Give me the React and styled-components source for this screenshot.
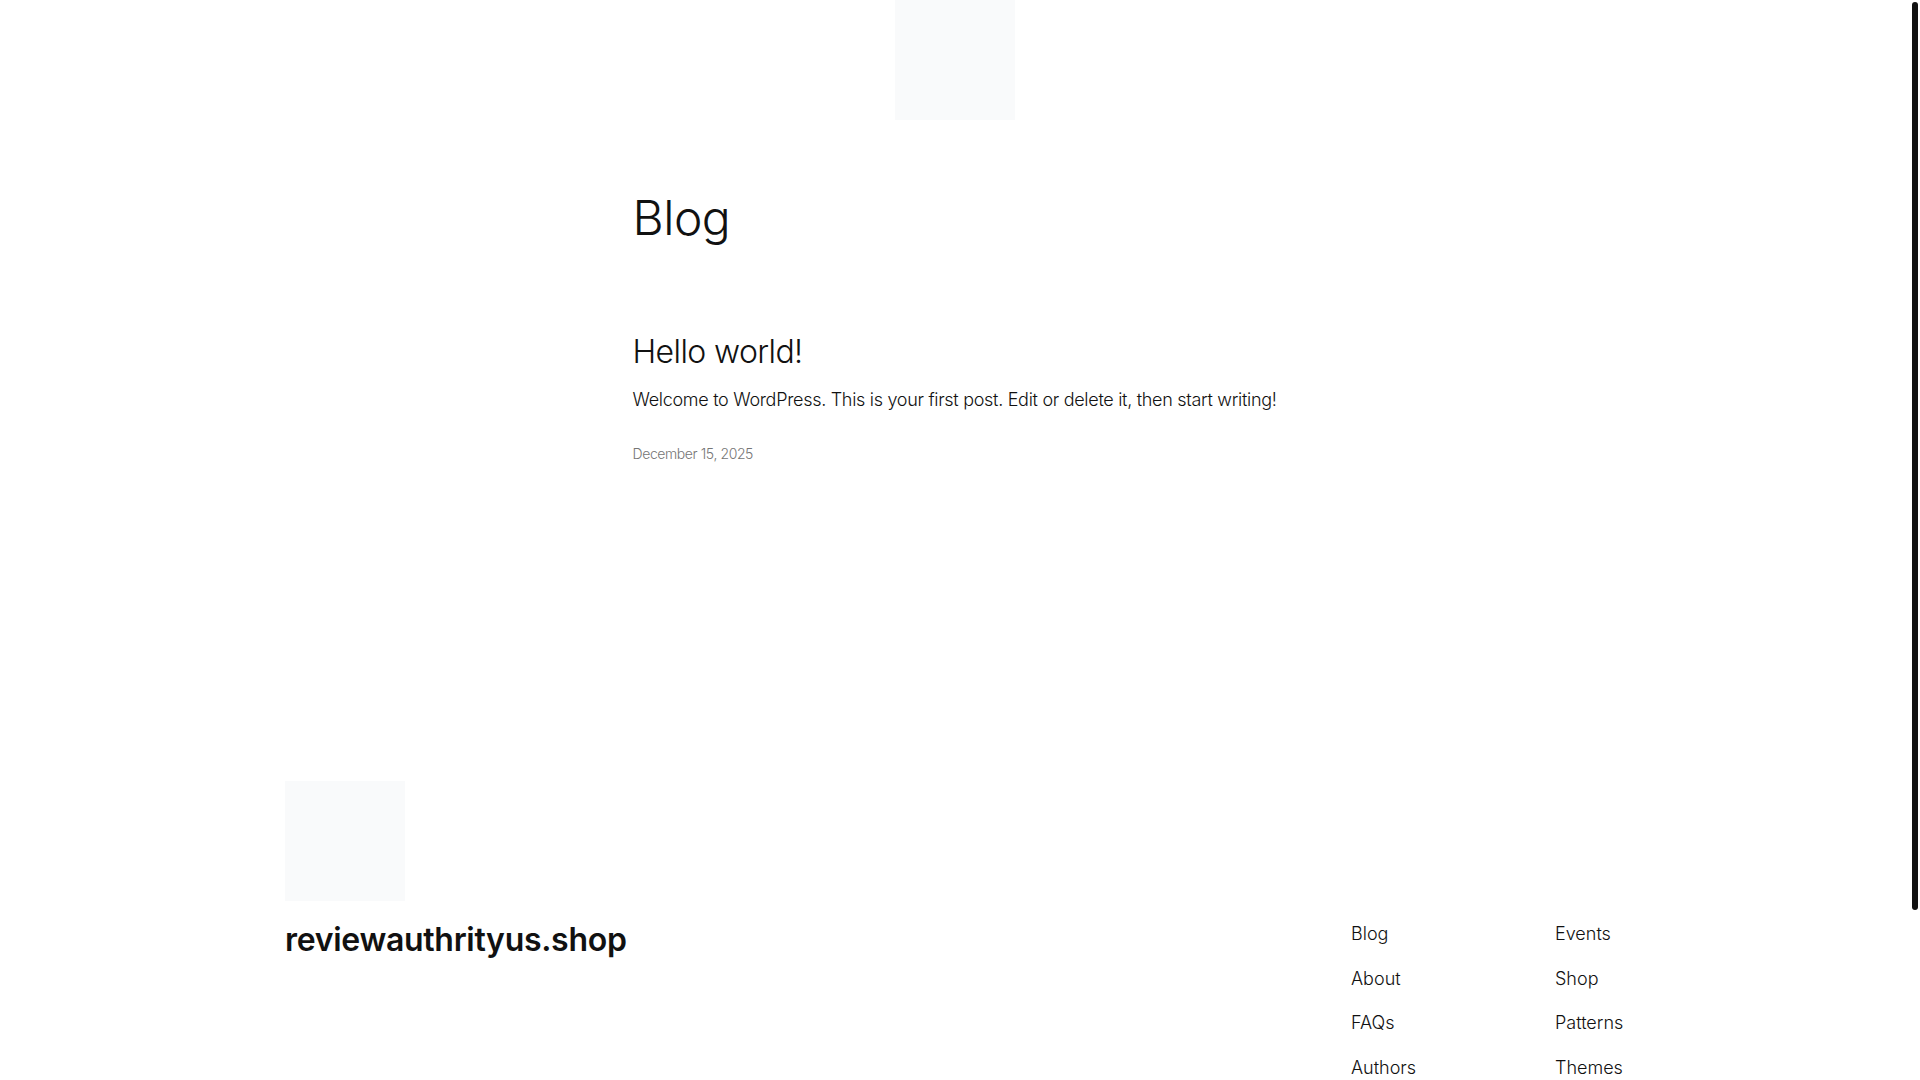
import styled, { createGlobalStyle } from "styled-components";

const GlobalStyle = createGlobalStyle`
  html, body {
    margin: 0;
    padding: 0;
    background: #ffffff;
  }
  body {
    font-family: Inter, "Noto Sans", sans-serif;
    color: #111111;
  }
`;

// the window's scrollbar thumb as it shows in the frame
const ScrollThumb = styled.div`
  position: fixed;
  top: 2px;
  right: 2px;
  width: 6px;
  height: 908px;
  border-radius: 3px;
  background: #111111;
`;

const Page = styled.div`
  display: flex;
  flex-direction: column;
  align-items: center;
  width: calc(100% - 10px);
  min-height: 1284px;
`;

const Header = styled.header`
  display: flex;
  justify-content: center;
  width: 100%;
`;

const LogoBox = styled.div`
  width: 120px;
  height: 120px;
  background: #f9fafb;
`;

const Main = styled.main`
  width: 645px;
  padding-top: 69px;
`;

const PageTitle = styled.h1`
  margin: 0;
  font-size: 48px;
  line-height: 1.2;
  font-weight: 300;
  letter-spacing: -0.5px;
`;

const Post = styled.article`
  margin-top: 86px;
`;

const PostTitle = styled.h2`
  margin: 0;
  font-size: 32px;
  line-height: 1.2;
  font-weight: 300;
  letter-spacing: -0.6px;
`;

const Excerpt = styled.p`
  margin: 15px 0 0;
  font-size: 18px;
  line-height: 1.6;
  font-weight: 300;
  letter-spacing: -0.3px;
  white-space: nowrap;
`;

const PostDate = styled.time`
  display: block;
  margin-top: 29px;
  font-size: 14px;
  line-height: 1.4;
  font-weight: 300;
  color: #757575;
  letter-spacing: -0.4px;
`;

const Footer = styled.footer`
  width: 1340px;
  margin-top: 318px;
  padding-bottom: 120px;
`;

const FooterRow = styled.div`
  display: flex;
  justify-content: space-between;
  align-items: flex-start;
  margin-top: 17px;
`;

const SiteTitle = styled.a`
  margin-top: 3px;
  font-size: 32px;
  line-height: 1.2;
  font-weight: 600;
  letter-spacing: -0.3px;
  color: #111111;
  text-decoration: none;
`;

const NavGrid = styled.nav`
  display: grid;
  grid-template-columns: 204px 70px;
  margin-top: 2px;
`;

const NavList = styled.ul`
  display: flex;
  flex-direction: column;
  gap: 15.6px;
  margin: 0;
  padding: 0;
  list-style: none;
`;

const NavLink = styled.a`
  font-size: 18px;
  line-height: 1.6;
  font-weight: 300;
  color: #111111;
  text-decoration: none;
  white-space: nowrap;
`;

const Credit = styled.p`
  margin: 80px 0 0;
  font-size: 14px;
  font-weight: 300;
  color: #111111;
`;

const navColumns = [
  ["Blog", "About", "FAQs", "Authors"],
  ["Events", "Shop", "Patterns", "Themes"],
];

export default function App() {
  return (
    <>
      <GlobalStyle />
      <Page>
        <Header>
          <LogoBox />
        </Header>
        <Main>
          <PageTitle>Blog</PageTitle>
          <Post>
            <PostTitle>Hello world!</PostTitle>
            <Excerpt>
              Welcome to WordPress. This is your first post. Edit or delete it, then start writing!
            </Excerpt>
            <PostDate>December 15, 2025</PostDate>
          </Post>
        </Main>
        <Footer>
          <LogoBox />
          <FooterRow>
            <SiteTitle href="#">reviewauthrityus.shop</SiteTitle>
            <NavGrid>
              {navColumns.map((col, i) => (
                <NavList key={i}>
                  {col.map((item) => (
                    <li key={item}>
                      <NavLink href="#">{item}</NavLink>
                    </li>
                  ))}
                </NavList>
              ))}
            </NavGrid>
          </FooterRow>
          <Credit>Designed with WordPress</Credit>
        </Footer>
      </Page>
      <ScrollThumb />
    </>
  );
}
